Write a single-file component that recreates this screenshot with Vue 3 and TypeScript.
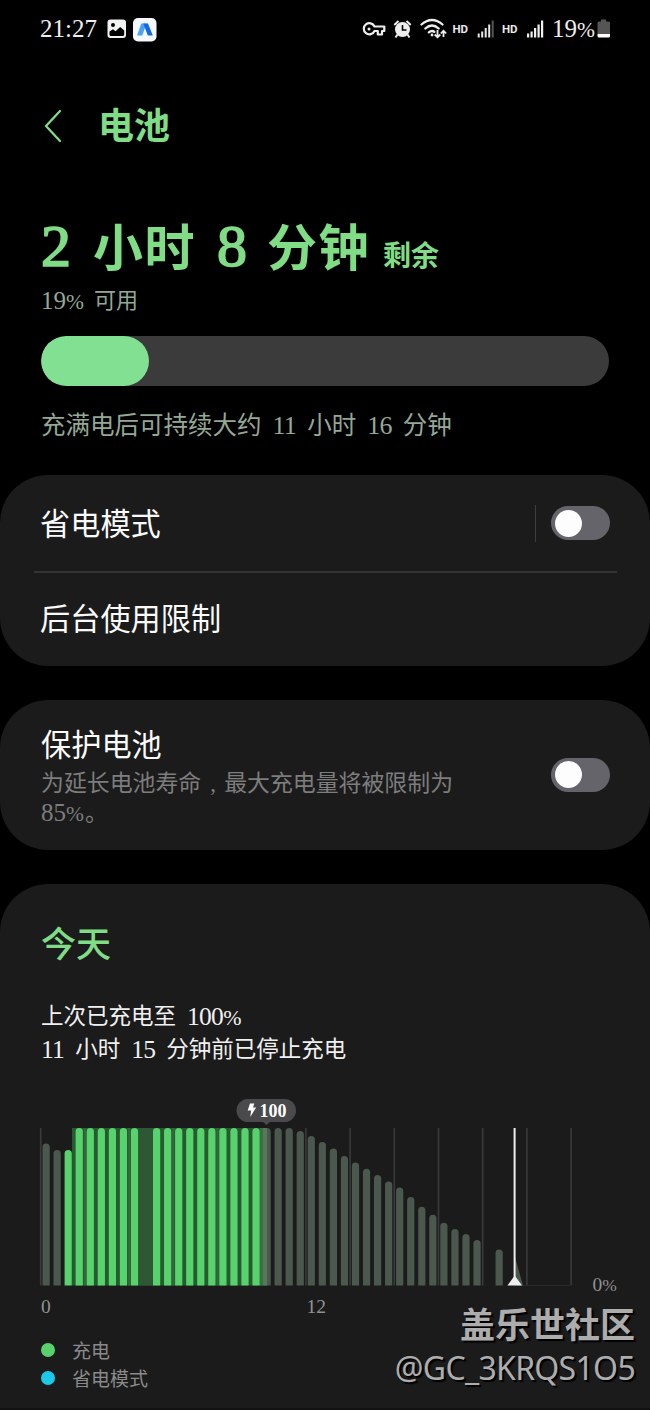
<script setup lang="ts">
type Bar = { x: number; top: number; charging: boolean }

const BASE = 1285.5 - 1095
const tops: (number | null)[] = [
  48.5, 55, 55, 33, 33, 33, 33, 33, 33, null,
  33, 33, 33, 33, 33, 33, 33, 33, 33, 33,
  33, 33, 33, 36, 41, 47, 53.5, 61, 67.5, 73.7,
  80, 86.5, 92.5, 102, 111.7, 119.7, 127.7, 134, 139, 145,
  null, 154.5,
]
const bars: Bar[] = tops
  .map((top, i) => ({ x: 42.5 + i * 11.05, top: top ?? -1, charging: i >= 2 && i <= 19 }))
  .filter((b) => b.top >= 0)
const grid: number[] = Array.from({ length: 13 }, (_, i) => 40.7 + i * 44.2)

function barPath(b: Bar): string {
  return `M${b.x} ${BASE}V${b.top + 3.5}a3.6 3.5 0 0 1 7.2 0V${BASE}z`
}
</script>

<template>
  <main class="screen">
    <header class="status">
      <span class="clock">21:27</span>
      <svg class="pic" width="20" height="20" viewBox="0 0 20 20">
        <rect x="0.5" y="0.5" width="18.5" height="18.5" rx="3" fill="#f2f2f2" />
        <circle cx="6" cy="6" r="2" fill="#000" />
        <path d="M2.500 15.500v-3l3.500-2.200 2.500 2 4.700-4.300 4 3.500v4q0 1.500-1.500 1.500H4q-1.500 0-1.500-1.500z" fill="#000" />
      </svg>
      <svg class="app" width="24" height="24" viewBox="0 0 24 24">
        <rect width="23.500" height="23.500" rx="5" fill="#f5f9ff" />
        <path d="M4 17.500 8.300 5.500h5.200L9.300 17.500z" fill="#4ba3f5" />
        <path d="M10.300 5.500H15l4.800 12h-5z" fill="#1767df" />
      </svg>
      <span class="grow"></span>
      <svg class="icons" width="190" height="30" viewBox="360 14 190 30">
        <g fill="none" stroke="#eee" stroke-width="2.200">
          <path d="M373.500 26.500h9.800v4.500h-2.300v3.500h-4.200V31h-3.300a5.600 5.600 0 1 1 0-4.500z" stroke-linejoin="round" />
          <circle cx="368" cy="29" r="1.500" fill="#eee" stroke="none" />
        </g>
        <circle cx="401.500" cy="29.500" r="7.500" fill="#eee" />
        <path d="M393.300 25l4.200-4M409.700 25l-4.200-4M396.500 34.500l-2 3M406.500 34.500l2 3" stroke="#eee" stroke-width="2" />
        <path d="M401.500 25v5h4" fill="none" stroke="#000" stroke-width="1.600" />
        <g fill="none" stroke="#eee" stroke-width="2.300" stroke-linecap="round">
          <path d="M420.500 24.500q10.500-9 21 0" />
          <path d="M424.300 28.500q6.700-6 13.400 0" />
          <path d="M427.800 32.300q3.200-2.500 5.500-.4" />
        </g>
        <circle cx="431" cy="35" r="1.400" fill="#eee" />
        <path d="M436.500 30v7M433.700 34.500l2.800 2.800 2.800-2.800M442.500 37v-6M439.800 33.500l2.700-2.800 2.700 2.800" fill="none" stroke="#eee" stroke-width="1.800" />
        <text x="451.500" y="33" class="hd">HD</text>
        <g fill="#e8e8e8">
          <rect x="476.700" y="33.500" width="2" height="4" />
          <rect x="480.200" y="31.500" width="2" height="6" />
          <rect x="483.700" y="28" width="2" height="9.500" />
          <rect x="487.200" y="24.500" width="2" height="13" />
          <rect x="490.700" y="20.500" width="2" height="17" fill="#555" />
        </g>
        <text x="501" y="33" class="hd">HD</text>
        <g fill="#f0f0f0">
          <rect x="526" y="33.500" width="2.200" height="4" />
          <rect x="529.500" y="31.500" width="2.200" height="6" />
          <rect x="533" y="28" width="2.200" height="9.500" />
          <rect x="536.500" y="24.500" width="2.200" height="13" />
          <rect x="540" y="20.500" width="2.200" height="17" />
        </g>
      </svg>
      <span class="pct">19<span class="p">%</span></span>
      <svg class="batt" width="14" height="20" viewBox="0 0 14 20">
        <path d="M4 .5h5v2h2.500q1.500 0 1.500 1.500V15H.5V4q0-1.500 1.500-1.500h2z" fill="#555" />
        <path d="M.5 15H13V17q0 1.500-1.500 1.500H2Q.5 18.500.5 17z" fill="#fff" />
      </svg>
    </header>

    <nav class="top">
      <svg width="20" height="34" viewBox="0 0 20 34">
        <path d="M17 2 3 17l14 15" fill="none" stroke="#80dc85" stroke-width="2.300" stroke-linecap="round" stroke-linejoin="round" />
      </svg>
      <h1>电池</h1>
    </nav>

    <section class="summary">
      <div class="remain">
        <span class="n">2</span><b class="c c1">小时</b><span class="n n2">8</span><b class="c c2">分钟</b><b class="left">剩余</b>
      </div>
      <div class="avail"><span class="n">19<span class="p">%</span></span><span>可用</span></div>
      <div class="meter"><div class="fill"></div></div>
      <div class="full">
        <span>充满电后可持续大约</span><span class="n">11</span><span>小时</span><span class="n">16</span><span>分钟</span>
      </div>
    </section>

    <section class="card modes">
      <div class="row first">
        <span class="label">省电模式</span>
        <span class="vline"></span>
        <span class="toggle"><i></i></span>
      </div>
      <div class="divider"></div>
      <div class="row"><span class="label">后台使用限制</span></div>
    </section>

    <section class="card protect">
      <div class="body">
        <div class="label">保护电池</div>
        <p>为延长电池寿命<span class="comma">,</span>最大充电量将被限制为<br /><span class="n">85<span class="p">%</span></span><span class="stop">。</span></p>
      </div>
      <span class="toggle"><i></i></span>
    </section>

    <section class="card today">
      <h2>今天</h2>
      <div class="info"><span>上次已充电至</span><span class="n">100<span class="p">%</span></span></div>
      <div class="info second">
        <span class="n">11</span><span>小时</span><span class="n">15</span><span>分钟前已停止充电</span>
      </div>
      <svg class="chart" width="650" height="225" viewBox="0 0 650 225">
        <g fill="#3a3a3a">
          <rect v-for="g in grid" :key="g" :x="g - 0.8" y="33" width="1.600" :height="BASE - 33" />
        </g>
        <rect x="72" y="33" width="191" :height="BASE - 33" fill="#275a30" />
        <rect x="138.500" y="33" width="14.500" :height="BASE - 33" fill="#2e5735" />
        <g fill="#386840">
          <rect v-for="g in grid.slice(1, 5)" :key="g" :x="g - 1" y="33" width="2" :height="BASE - 33" />
        </g>
        <path v-for="b in bars" :key="b.x" :d="barPath(b)" :fill="b.charging ? '#58d26c' : '#4b584d'" />
        <rect x="260" y="33" width="3" :height="BASE - 33" fill="#387043" />
        <rect x="263" y="33" width="4" :height="BASE - 33" fill="#567a59" />
        <path d="M515 162l8 28.500h-8z" fill="#4b584d" />
        <path d="M523 190.500h48" stroke="#292929" />
        <rect x="513.600" y="33" width="2" height="157" fill="#eee" />
        <path d="M514.700 180.500l7.300 10h-14.600z" fill="#eee" />
        <path d="M262 26h9l-4.500 4z" fill="#4a4a4c" />
        <rect x="236.500" y="4" width="59.500" height="23" rx="11.500" fill="#4a4a4c" />
        <path d="M250 8.500h4.300l-1.300 4h3.200l-6 9.500 1-6.500h-3.500z" fill="#fff" />
        <text x="259.500" y="22.300" class="badge">100</text>
        <text x="41" y="217.500" class="axis">0</text>
        <text x="306.500" y="217.500" class="axis">12</text>
        <text x="592.500" y="196" class="axis">0<tspan class="ap">%</tspan></text>
      </svg>
      <div class="legend"><i class="green"></i><span>充电</span></div>
      <div class="legend"><i class="cyan"></i><span>省电模式</span></div>
      <div class="edge"></div>
    </section>

    <aside class="mark">
      <div class="forum">盖乐世社区</div>
      <div class="user">@GC_3KRQS1O5</div>
    </aside>
  </main>
</template>

<style>
body {
  background: #000;
}
</style>

<style scoped>
.screen {
  position: relative;
  width: 650px;
  height: 1410px;
  overflow: hidden;
  background: #000;
  color: #f4f4f4;
  font-family: "Liberation Serif", "Noto Sans CJK SC", serif;
}
.status {
  display: flex;
  align-items: center;
  height: 58px;
  padding: 0 39px 0 40px;
}
.clock { font-size: 25px; line-height: 30px; width: 67px; color: #eee; }
.pic { margin-right: 6px; }
.app { margin-top: 1px; }
.grow { flex: 1; }
.pct { font-size: 25px; line-height: 30px; width: 46px; margin-left: 1px; color: #eee; }
.p { font-size: 0.86em; letter-spacing: 0; }
.batt { margin-left: -1px; }
.hd { font: 700 11.500px Roboto, sans-serif; fill: #e8e8e8; }
.top {
  display: flex;
  align-items: center;
  height: 136px;
  padding-left: 43px;
}
.top h1 { margin: 2px 0 0 35px; font-size: 36px; line-height: 44px; font-weight: 700; color: #80dc85; }
.summary { height: 281px; padding: 0 41px; }
.remain { display: flex; align-items: baseline; height: 92px; line-height: 92px; padding-top: 6px; color: #80dc85; white-space: nowrap; }
.remain .n { font-size: 60px; width: 30px; -webkit-text-stroke: 1.700px #80dc85; }
.remain .c { font-size: 50px; letter-spacing: 1.500px; width: 102px; }
.remain .c1 { margin-left: 22px; }
.remain .n2 { margin-left: 22px; }
.remain .c2 { margin-left: 20px; }
.remain .left { font-size: 28px; margin-left: 14px; }
.avail { display: flex; gap: 10px; height: 30px; line-height: 30px; margin-top: -6px; font-size: 22px; color: #94a896; }
.avail .n { font-size: 25px; }
.meter { margin-top: 19.500px; height: 50.500px; border-radius: 26px; background: #3b3b3b; overflow: hidden; }
.fill { width: 108px; height: 100%; border-radius: 26px; background: #82e092; }
.full { display: flex; gap: 11px; margin-top: 22.500px; height: 34px; line-height: 34px; font-size: 24.500px; color: #94a896; white-space: nowrap; }
.full .n { font-size: 26px; letter-spacing: -0.700px; }
.card { background: #1b1b1b; border-radius: 48px; }
.modes { height: 190.500px; }
.row { display: flex; align-items: center; height: 95px; padding: 0 40px; }
.row.first { height: 96px; }
.label { font-size: 30.200px; line-height: 40px; color: #fafafa; }
.row .label { padding-top: 3px; }
.vline { width: 1px; height: 37px; margin: 0 15px 0 auto; background: #3d3d3d; }
.toggle { display: block; box-sizing: border-box; width: 59px; height: 34px; padding: 3.500px; border-radius: 17px; background: #65646a; }
.toggle i { display: block; width: 27px; height: 27px; border-radius: 50%; background: #fdfdfd; }
.divider { height: 2px; margin: -0.500px 33px -1.500px 34px; background: #333; }
.protect { display: flex; justify-content: space-between; align-items: center; height: 150.500px; margin-top: 34px; padding: 0 40px 0 41px; }
.body { height: 124px; padding-top: 13px; box-sizing: border-box; }
.body p { margin: 3px 0 0; font-size: 22.900px; line-height: 29px; color: #7d7d7d; }
.body .n { font-size: 25px; }
.stop { margin-left: 1px; }
.comma { display: inline-block; width: 22.900px; text-indent: 9px; }
.today { position: relative; height: 526px; margin-top: 34px; border-radius: 48px 48px 0 0; }
.today h2 { margin: 0; padding: 39px 0 0 41px; height: 44px; font-size: 35px; line-height: 46px; font-weight: 500; color: #80dc85; }
.info { display: flex; gap: 11px; height: 33px; line-height: 33px; padding: 33px 0 0 41px; font-size: 22.500px; color: #f0f0f0; }
.info.second { padding-top: 0; }
.info .n { font-size: 25.500px; letter-spacing: -0.700px; }
.chart { display: block; margin-top: 29px; }
.badge { font: 700 18px "Liberation Serif", serif; fill: #fff; }
.axis { font: 19.500px "Liberation Serif", serif; fill: #929292; }
.ap { font-size: 17.500px; }
.legend { display: flex; align-items: center; height: 28px; padding-left: 41px; font-size: 19px; color: #8a8a8a; }
.legend span { padding-bottom: 2px; }
.chart + .legend { margin-top: 16px; }
.legend i { width: 14px; height: 14px; margin-right: 17px; border-radius: 50%; }
.green { background: #58d26c; }
.cyan { background: #1cc8e8; }
.edge { position: absolute; left: 0; right: 0; bottom: 0; height: 2px; background: #121212; }
.mark { position: absolute; right: 15px; top: 1298px; text-align: right; color: #adadad; text-shadow: 2px 2px 1px #000; }
.forum { font: 700 35px/50px "Noto Sans CJK SC", sans-serif; }
.user { font: 32px/40px "Noto Sans", sans-serif; letter-spacing: -0.700px; white-space: nowrap; }
</style>
